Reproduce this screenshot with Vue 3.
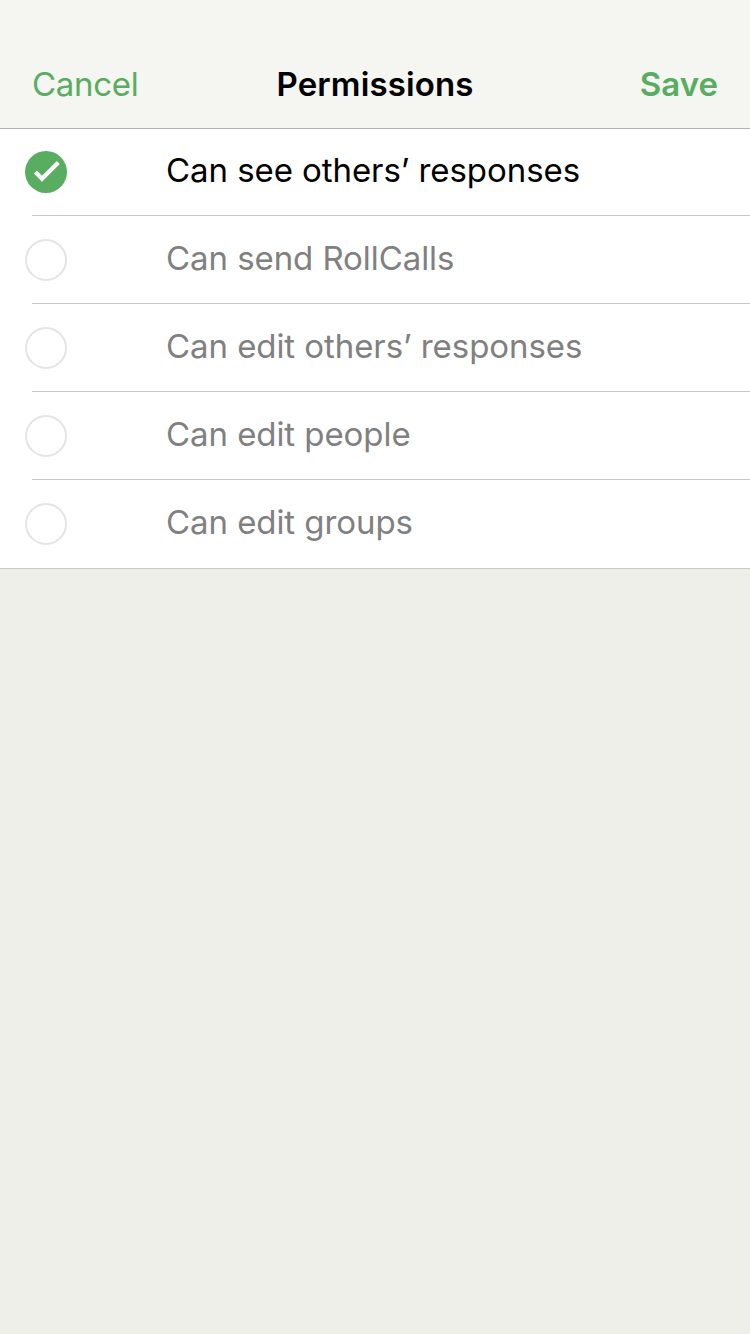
<script setup>
const permissions = [
  { label: 'Can see others’ responses', on: true },
  { label: 'Can send RollCalls', on: false },
  { label: 'Can edit others’ responses', on: false },
  { label: 'Can edit people', on: false },
  { label: 'Can edit groups', on: false },
]
</script>

<template>
  <div class="screen">
    <header class="nav">
      <span class="action cancel">Cancel</span>
      <h1 class="title">Permissions</h1>
      <span class="action save">Save</span>
    </header>
    <ul class="list">
      <li v-for="p in permissions" :key="p.label" class="row" :class="{ on: p.on }">
        <svg class="mark" width="42" height="42" viewBox="0 0 42 42">
          <template v-if="p.on">
            <circle cx="21" cy="21" r="21" fill="#58ad61" />
            <path d="M10.4 21.1 L17 27.7 L33.3 11.4" fill="none" stroke="#fff" stroke-width="4.2" />
          </template>
          <circle v-else cx="21" cy="21" r="20" fill="#fff" stroke="#e4e4e4" stroke-width="2" />
        </svg>
        <span class="label">{{ p.label }}</span>
      </li>
    </ul>
  </div>
</template>

<style>
body { background: #efefea; }
</style>

<style scoped>
.screen {
  width: 750px;
  height: 1334px;
  background: #efefea;
  font-family: Inter, sans-serif;
  font-size: 33px;
  line-height: 40px;
  letter-spacing: -0.07px;
}
.nav {
  box-sizing: border-box;
  height: 129px;
  padding: 40px 32px 0;
  display: grid;
  grid-template-columns: 1fr auto 1fr;
  align-items: center;
  background: #f5f5f1;
  border-bottom: 1px solid #b2b2b2;
  white-space: nowrap;
}
.action { color: #58ad61; }
.cancel { letter-spacing: -0.3px; }
.save { justify-self: end; font-weight: 600; letter-spacing: 0; }
.title { margin: 0; font-size: 33px; font-weight: 600; letter-spacing: 0.12px; }
.list {
  margin: 0;
  padding: 0;
  list-style: none;
  background: #fff;
  border-bottom: 1px solid #c8c7cc;
}
.row {
  box-sizing: border-box;
  height: 88px;
  margin-left: 32px;
  padding-top: 23px;
  display: flex;
  align-items: flex-start;
  color: #808080;
  border-bottom: 1px solid #c8c7cc;
}
.row:first-child { height: 87px; padding-top: 22px; }
.row:last-child { border-bottom: 0; }
.row.on { color: #000; }
.mark { margin-left: -7px; flex: none; }
.label { margin: -1px 0 0 99px; white-space: nowrap; }
</style>
